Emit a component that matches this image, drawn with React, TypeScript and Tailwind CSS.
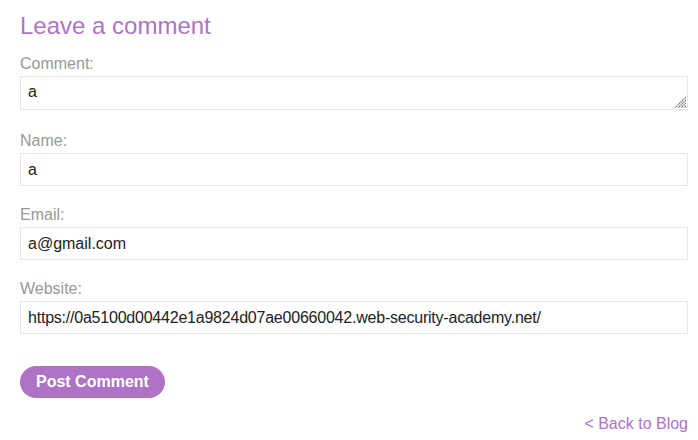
const fieldClass =
  "block w-full h-[33px] border border-[#e6e6e6] bg-white px-[7px] text-base text-[#222] outline-none font-['Liberation_Sans',Arial,sans-serif]"

const Field = ({ label, value, tight }: { label: string; value: string; tight?: boolean }) => (
  <div className="mt-[20px]">
    <label className="mb-[3px] block text-base leading-[18px] text-[#999]">{label}</label>
    <input className={fieldClass + (tight ? " tracking-[-0.22px]" : "")} type="text" defaultValue={value} />
  </div>
)

export default function App() {
  return (
    <div className="min-h-[440px] bg-white pl-5 pr-[10px] pt-3 font-['Liberation_Sans',Arial,sans-serif]">
      <h1 className="text-2xl leading-7 text-[#ae73c4]">Leave a comment</h1>
      <form className="mt-[15px]" onSubmit={(e) => e.preventDefault()}>
        <label className="mb-[3px] block text-base leading-[18px] text-[#999]">Comment:</label>
        <div className="relative">
          <textarea
            className="block h-[34px] w-full resize-none border border-[#e6e6e6] bg-white px-[7px] py-[5px] text-base leading-[20px] text-[#222] outline-none font-['Liberation_Sans',Arial,sans-serif]"
            defaultValue="a"
          />
          {/* resize grip */}
          <svg className="absolute bottom-[2px] right-[2px]" width="12" height="12" viewBox="0 0 12 12">
            <g stroke="#6f6f6f" strokeWidth="1.1" strokeDasharray="1.5 0.6">
              <line x1="12" y1="1" x2="1" y2="12" />
              <line x1="12" y1="4" x2="4" y2="12" />
              <line x1="12" y1="7" x2="7" y2="12" />
              <line x1="12" y1="10" x2="10" y2="12" />
            </g>
          </svg>
        </div>
        <div className="h-[2px]"></div>
        <Field label="Name:" value="a" />
        <Field label="Email:" value="a@gmail.com" />
        <Field label="Website:" value="https://0a5100d00442e1a9824d07ae00660042.web-security-academy.net/" tight />
        <button
          type="submit"
          className="mt-8 h-8 rounded-full bg-[#ae73c4] px-4 text-base font-bold text-white"
        >
          Post Comment
        </button>
      </form>
      <div className="mt-[16px] text-right text-base leading-5">
        <a href="#" className="text-[#ae73c4]">
          &lt; Back to Blog
        </a>
      </div>
    </div>
  )
}
